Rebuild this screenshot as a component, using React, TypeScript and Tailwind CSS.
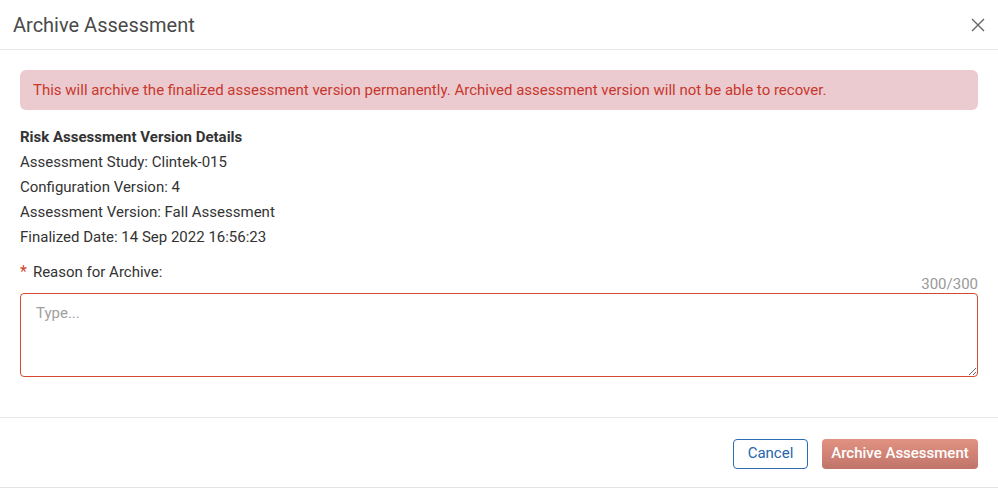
import React from "react";

export default function App() {
  return (
    <div
      className="w-[998px] h-[488px] bg-white flex flex-col border-b border-[#e3e3e3] text-[#333]"
      style={{ fontFamily: "Roboto, 'Liberation Sans', sans-serif" }}
    >
      <div className="h-[50px] flex items-center justify-between pl-[13px] pr-[12px] border-b border-[#e6e6e6] shrink-0">
        <h1 className="text-[20px] text-[#4a4a4a] leading-none">Archive Assessment</h1>
        <svg width="16" height="16" viewBox="0 0 16 16" className="text-[#666]">
          <path d="M2 2L14 14M14 2L2 14" stroke="currentColor" strokeWidth="1.4" />
        </svg>
      </div>
      <div className="flex-1 px-[20px] pt-[20px]">
        <div className="h-[40px] rounded-[6px] bg-[#ebcbcf] flex items-center px-[13px] text-[15px] text-[#c8372d]">
          This will archive the finalized assessment version permanently. Archived assessment version will not be able to recover.
        </div>
        <div className="mt-[15px] text-[15px] leading-[25px] text-[#333]">
          <div className="font-bold">Risk Assessment Version Details</div>
          <div>Assessment Study: Clintek-015</div>
          <div>Configuration Version: 4</div>
          <div>Assessment Version: Fall Assessment</div>
          <div>Finalized Date: 14 Sep 2022 16:56:23</div>
        </div>
        <div className="mt-[12px] text-[15px] leading-[20px] flex items-center">
          <span className="text-[#d0452f] mr-[6px] text-[16px]">*</span>
          <span>Reason for Archive:</span>
        </div>
        <div className="text-right text-[15px] text-[#999] leading-[16px] -mt-[6px] mb-[1px]">300/300</div>
        <textarea
          placeholder="Type..."
          className="block w-full h-[84px] border border-[#d4492f] rounded-[4px] px-[15px] pt-[8px] pb-[8px] text-[15px] placeholder:text-[#a0a0a0] outline-none resize-y"
        />
      </div>
      <div className="h-[70px] border-t border-[#e6e6e6] flex items-center justify-end gap-[14px] pr-[20px] pt-[2px] shrink-0">
        <button className="h-[30px] w-[75px] rounded-[4px] border border-[#2b6cb3] text-[#2566ae] text-[15px] bg-white">
          Cancel
        </button>
        <button className="h-[30px] w-[156px] rounded-[4px] text-white text-[15px] font-medium bg-gradient-to-b from-[#e19282] to-[#c07469]">
          Archive Assessment
        </button>
      </div>
    </div>
  );
}
